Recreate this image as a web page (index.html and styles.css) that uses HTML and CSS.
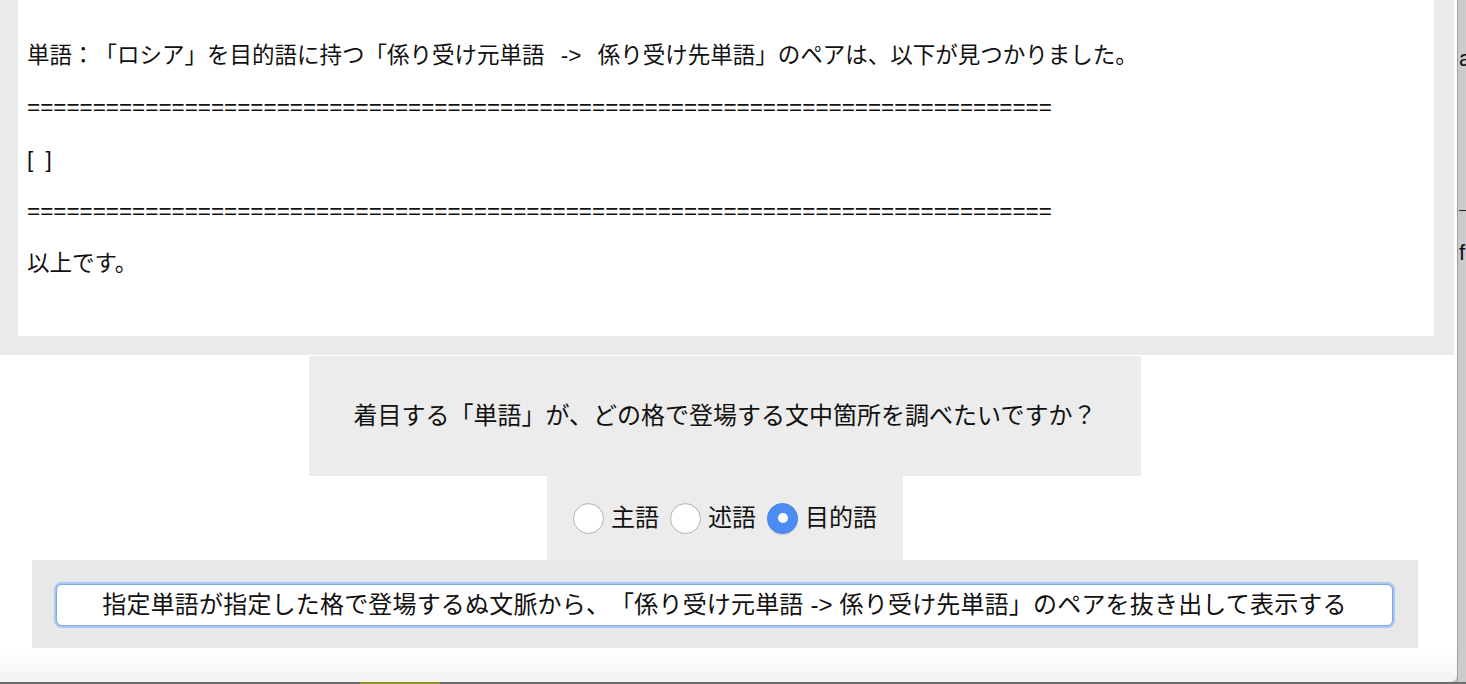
FILE: index.html
```html
<!DOCTYPE html>
<html lang="ja">
<head>
<meta charset="utf-8">
<title>係り受け検索</title>
<link rel="stylesheet" href="styles.css">
</head>
<body>
<div class="desktop">
  <div class="window">
    <section class="output">
      <div class="output-inner">
        <p>単語：「ロシア」を目的語に持つ「係り受け元単語 <span class="arrow">-&gt;</span> 係り受け先単語」のペアは、以下が見つかりました。</p>
        <p>==============================================================================</p>
        <p class="empty-list">[ ]</p>
        <p>==============================================================================</p>
        <p>以上です。</p>
      </div>
    </section>
    <div class="controls">
      <div class="question">着目する「単語」が、どの格で登場する文中箇所を調べたいですか？</div>
      <div class="cases">
        <label class="case"><input type="radio" name="case" value="subject"><span>主語</span></label>
        <label class="case"><input type="radio" name="case" value="predicate"><span>述語</span></label>
        <label class="case"><input type="radio" name="case" value="object" checked><span>目的語</span></label>
      </div>
      <div class="action">
        <button class="run" type="button">指定単語が指定した格で登場するぬ文脈から、「係り受け元単語 -&gt; 係り受け先単語」のペアを抜き出して表示する</button>
      </div>
    </div>
  </div>
  <div class="behind">
    <span class="behind-a">a</span>
    <span class="behind-rule"></span>
    <span class="behind-f">f</span>
  </div>
</div>
<div class="dock-edge"></div>
</body>
</html>
```

FILE: styles.css
```css
* { box-sizing: border-box; }

html, body {
  margin: 0;
  padding: 0;
  height: 100%;
  overflow: hidden;
}

body {
  font-family: "Liberation Sans", "Noto Sans CJK JP", sans-serif;
  color: #111;
  background: #c9c9c9;
  text-spacing-trim: space-all;
}

.desktop {
  display: flex;
  height: 682px;
}

.window {
  width: 1457px;
  flex: none;
  background: linear-gradient(to bottom, #ffffff 0, #ffffff 650px, #f3f3f3 100%);
  border-bottom-right-radius: 7px;
  overflow: hidden;
}

.output {
  width: 1454px;
  background: #ebebeb;
  padding: 0 20px 19px 18px;
}

.output-inner {
  background: #ffffff;
  padding: 41px 9px 57px;
}

.output-inner p {
  margin: 22px 0;
  font-size: 22.5px;
  line-height: 30px;
  white-space: nowrap;
}

.output-inner p:first-child { margin-top: 0; }
.output-inner p:last-child { margin-bottom: 0; }

.empty-list { letter-spacing: 3px; }

.arrow {
  display: inline-block;
  padding: 0 10px;
}

.controls {
  width: 1450px;
  display: flex;
  flex-direction: column;
  align-items: center;
}

.question {
  margin-top: 1px;
  background: #ececec;
  padding: 45px 45px;
  font-size: 24px;
  line-height: 30px;
  white-space: nowrap;
}

.cases {
  height: 84px;
  background: #ececec;
  padding: 0 26px;
  display: flex;
  align-items: center;
}

.case {
  display: flex;
  align-items: center;
  font-size: 24px;
  line-height: 30px;
  margin-right: 11px;
}

.case:last-child { margin-right: 0; }

.case span { margin-left: 7px; }

.case input {
  appearance: none;
  -webkit-appearance: none;
  margin: 0;
  width: 31px;
  height: 31px;
  border-radius: 50%;
  border: 1px solid #b4b4b4;
  background: #ffffff;
  box-shadow: inset 0 1px 1px rgba(0,0,0,0.06);
  display: flex;
  align-items: center;
  justify-content: center;
}

.case input:checked {
  border-color: #3f83f0;
  background: #4a8cf4;
  box-shadow: 0 1px 1px rgba(0,0,0,0.15);
}

.case input:checked::after {
  content: "";
  width: 10px;
  height: 10px;
  border-radius: 50%;
  background: #ffffff;
}

.action {
  width: 1386px;
  background: #e8e8e8;
  padding: 24px 25px 22px 24px;
}

.run {
  display: block;
  width: 100%;
  height: 42px;
  margin: 0;
  padding: 0 4px;
  background: #ffffff;
  border: 1px solid #7fa9e6;
  border-radius: 6px;
  box-shadow: 0 0 0 2px #a8c7f2;
  font-family: "Liberation Sans", "Noto Sans CJK JP", sans-serif;
  font-size: 24px;
  line-height: 30px;
  letter-spacing: 0.18px;
  color: #111;
  white-space: nowrap;
  text-spacing-trim: space-all;
}

.behind {
  flex: 1;
  background: #cbcbcb;
  border-left: 1px solid #9f9f9f;
  overflow: hidden;
  display: flex;
  flex-direction: column;
  padding-left: 1px;
  font-size: 22px;
  color: #111;
}

.behind-a {
  margin-top: 44px;
  line-height: 30px;
}

.behind-rule {
  display: block;
  margin-top: 136px;
  height: 1px;
  width: 20px;
  background: #222;
}

.behind-f {
  margin-top: 27px;
  line-height: 30px;
}

.dock-edge {
  height: 2px;
  background: linear-gradient(to right, #6b6b6b 0, #6b6b6b 360px, #8f8f2a 360px, #8f8f2a 440px, #6b6b6b 440px);
}
```
